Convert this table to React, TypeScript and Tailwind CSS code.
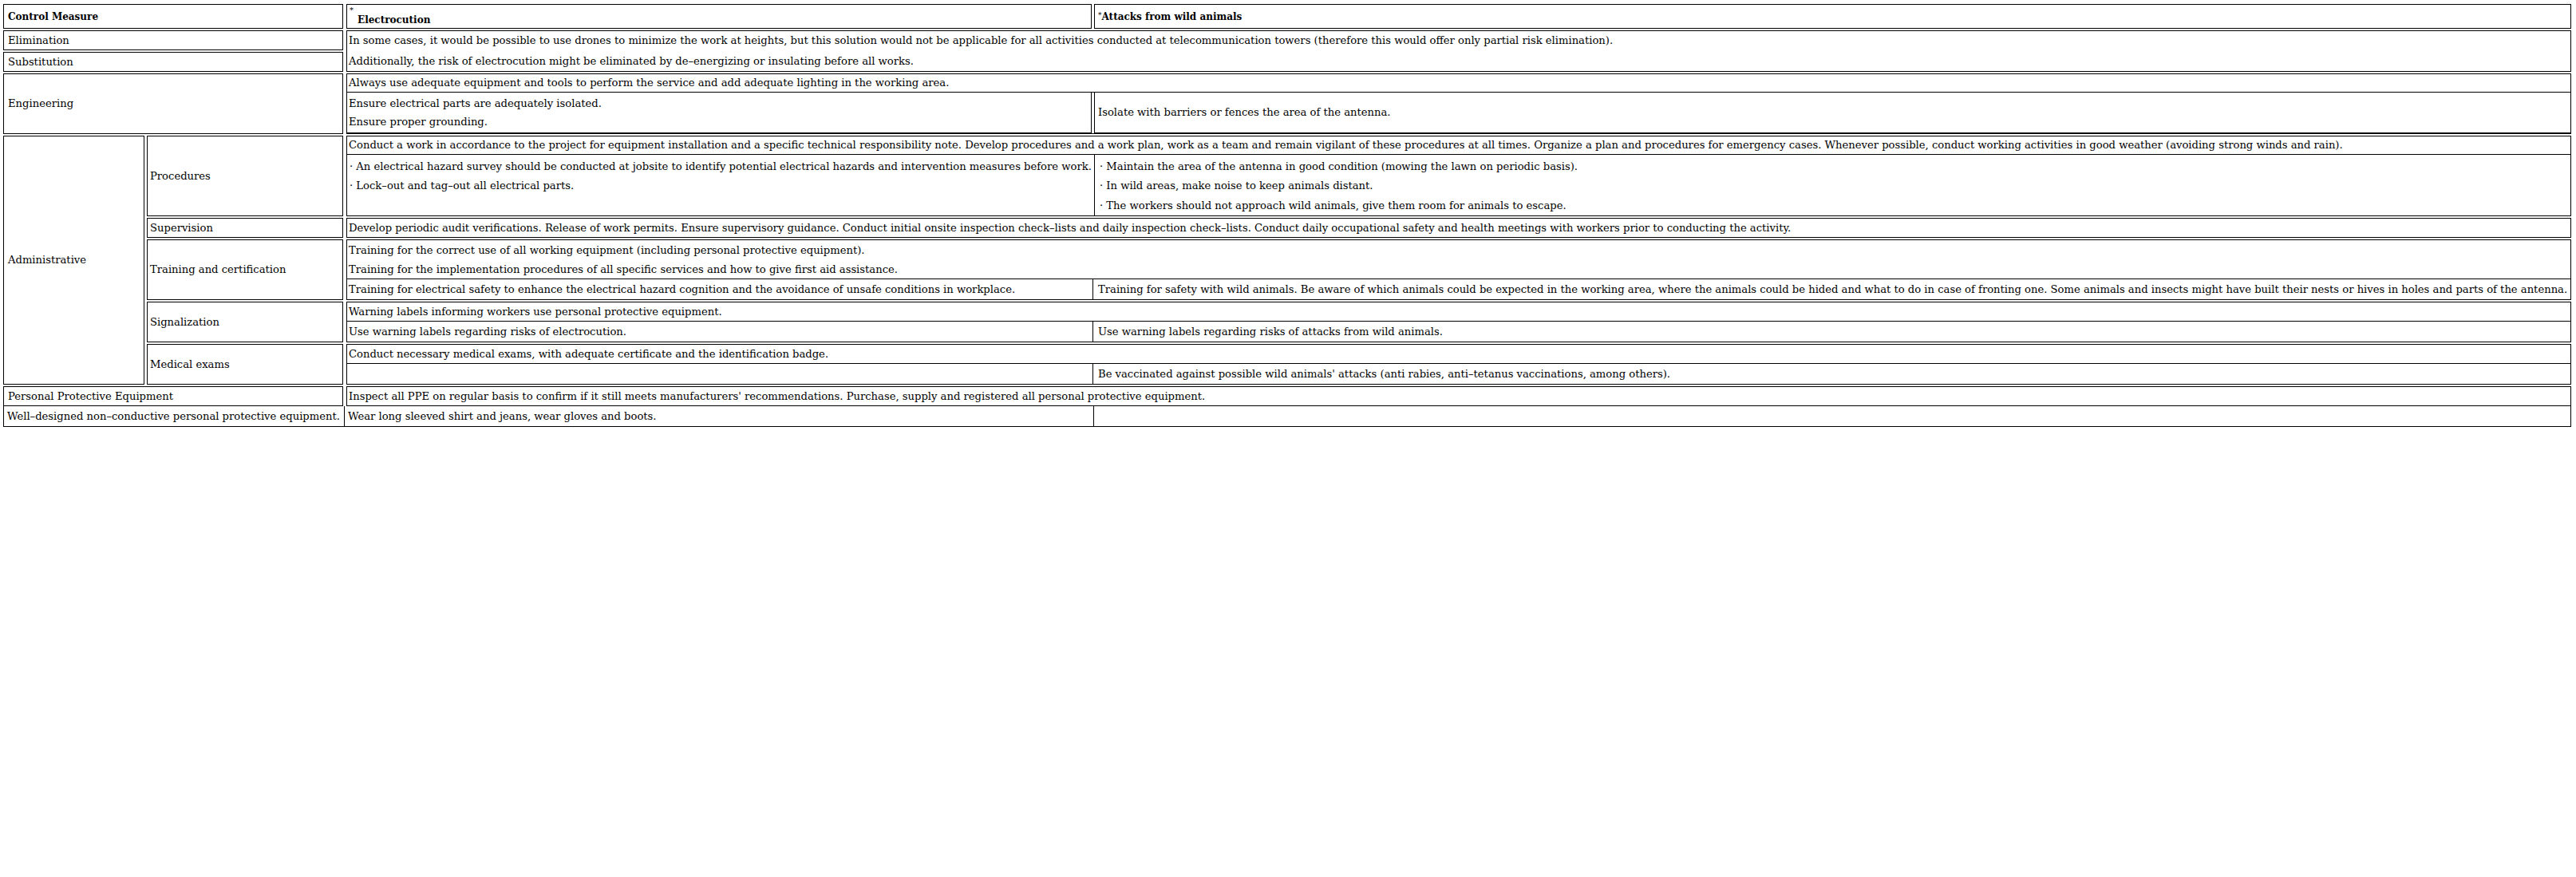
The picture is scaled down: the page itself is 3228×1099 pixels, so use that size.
const B = "border border-black";

function Row({ h, children }: { h: string; children: React.ReactNode }) {
  return <div className={`flex ${h}`}>{children}</div>;
}

export default function App() {
  return (
    <div className="w-[3228px] h-[1099px] bg-white text-black font-['DejaVu_Serif',serif] text-[13.15px] leading-[16px] pt-[5px] pl-[4px] whitespace-nowrap">
      <div className="flex flex-col gap-[2px] w-[3218px]">
        {/* header */}
        <Row h="h-[31px]">
          <div className={`${B} w-[426px] flex items-center pl-[5px] font-bold text-[12px]`}>Control Measure</div>
          <div className={`${B} ml-[4px] w-[934px] flex flex-col pt-[2px] pl-[3px]`}>
            <span className="text-[10px] leading-[9px]">*</span>
            <span className="font-bold text-[12px] pl-[10px] leading-[17px]">Electrocution</span>
          </div>
          <div className={`${B} ml-[3px] w-[1851px] flex items-center pl-[4px] font-bold text-[12px]`}>
            <span className="font-normal text-[9px] self-start mt-[5px]">*</span>Attacks from wild animals
          </div>
        </Row>

        {/* elimination + substitution */}
        <Row h="h-[52px]">
          <div className="w-[426px] flex flex-col gap-[2px]">
            <div className={`${B} h-[25px] flex items-center pl-[5px]`}>Elimination</div>
            <div className={`${B} h-[25px] flex items-center pl-[5px]`}>Substitution</div>
          </div>
          <div className={`${B} ml-[4px] w-[2788px] flex flex-col pl-[2px]`}>
            <div className="h-[24px] flex items-center">
              In some cases, it would be possible to use drones to minimize the work at heights, but this solution would not be applicable for all activities conducted at telecommunication towers (therefore this would offer only partial risk elimination).
            </div>
            <div className="h-[26px] flex items-center pt-[2px]">
              Additionally, the risk of electrocution might be eliminated by de–energizing or insulating before all works.
            </div>
          </div>
        </Row>

        {/* engineering */}
        <Row h="h-[76px]">
          <div className={`${B} w-[426px] flex items-center pl-[5px]`}>Engineering</div>
          <div className={`${B} ml-[4px] w-[2788px] flex flex-col`}>
            <div className="h-[23px] border-b border-black flex items-center pl-[2px]">
              Always use adequate equipment and tools to perform the service and add adequate lighting in the working area.
            </div>
            <div className="flex flex-1">
              <div className="w-[933px] border-r border-b border-black flex flex-col justify-center pl-[2px]">
                <div className="h-[23px] flex items-center pt-[1px]">Ensure electrical parts are adequately isolated.</div>
                <div className="h-[23px] flex items-center pt-[1px]">Ensure proper grounding.</div>
              </div>
              <div className="ml-[3px] flex-1 border-l border-b border-black flex items-center pl-[4px]">
                Isolate with barriers or fences the area of the antenna.
              </div>
            </div>
          </div>
        </Row>

        {/* administrative */}
        <Row h="h-[312px]">
          <div className={`${B} w-[177px] flex items-center pl-[5px]`}>Administrative</div>
          <div className="ml-[3px] flex flex-col gap-[2px]">
            {/* procedures */}
            <Row h="h-[101px]">
              <div className={`${B} w-[246px] flex items-center pl-[3px]`}>Procedures</div>
              <div className={`${B} ml-[4px] w-[2788px] flex flex-col`}>
                <div className="h-[24px] border-b border-black flex items-center pl-[2px]">
                  Conduct a work in accordance to the project for equipment installation and a specific technical responsibility note. Develop procedures and a work plan, work as a team and remain vigilant of these procedures at all times. Organize a plan and procedures for emergency cases. Whenever possible, conduct working activities in good weather (avoiding strong winds and rain).
                </div>
                <div className="flex flex-1">
                  <div className="w-[936px] flex flex-col pt-[3px] pl-[3px]">
                    <div className="h-[24px] flex items-center">· An electrical hazard survey should be conducted at jobsite to identify potential electrical hazards and intervention measures before work.</div>
                    <div className="h-[24px] flex items-center">· Lock–out and tag–out all electrical parts.</div>
                  </div>
                  <div className="flex-1 border-l border-black flex flex-col pt-[3px] pl-[6px]">
                    <div className="h-[24px] flex items-center">· Maintain the area of the antenna in good condition (mowing the lawn on periodic basis).</div>
                    <div className="h-[24px] flex items-center">· In wild areas, make noise to keep animals distant.</div>
                    <div className="h-[25px] flex items-center">· The workers should not approach wild animals, give them room for animals to escape.</div>
                  </div>
                </div>
              </div>
            </Row>

            {/* supervision */}
            <Row h="h-[25px]">
              <div className={`${B} w-[246px] flex items-center pl-[3px]`}>Supervision</div>
              <div className={`${B} ml-[4px] w-[2788px] flex items-center pl-[2px]`}>
                Develop periodic audit verifications. Release of work permits. Ensure supervisory guidance. Conduct initial onsite inspection check–lists and daily inspection check–lists. Conduct daily occupational safety and health meetings with workers prior to conducting the activity.
              </div>
            </Row>

            {/* training */}
            <Row h="h-[76px]">
              <div className={`${B} w-[246px] flex items-center pl-[3px]`}>Training and certification</div>
              <div className={`${B} ml-[4px] w-[2788px] flex flex-col`}>
                <div className="h-[49px] border-b border-black flex flex-col pl-[2px]">
                  <div className="h-[25px] flex items-center pt-[2px]">Training for the correct use of all working equipment (including personal protective equipment).</div>
                  <div className="h-[24px] flex items-center pt-[2px]">Training for the implementation procedures of all specific services and how to give first aid assistance.</div>
                </div>
                <div className="flex flex-1">
                  <div className="w-[934px] flex items-center pl-[2px]">
                    Training for electrical safety to enhance the electrical hazard cognition and the avoidance of unsafe conditions in workplace.
                  </div>
                  <div className="flex-1 border-l border-black flex items-center pl-[6px]">
                    Training for safety with wild animals. Be aware of which animals could be expected in the working area, where the animals could be hided and what to do in case of fronting one. Some animals and insects might have built their nests or hives in holes and parts of the antenna.
                  </div>
                </div>
              </div>
            </Row>

            {/* signalization */}
            <Row h="h-[51px]">
              <div className={`${B} w-[246px] flex items-center pl-[3px]`}>Signalization</div>
              <div className={`${B} ml-[4px] w-[2788px] flex flex-col`}>
                <div className="h-[24px] border-b border-black flex items-center pl-[2px]">
                  Warning labels informing workers use personal protective equipment.
                </div>
                <div className="flex flex-1">
                  <div className="w-[934px] flex items-center pl-[2px]">Use warning labels regarding risks of electrocution.</div>
                  <div className="flex-1 border-l border-black flex items-center pl-[6px]">Use warning labels regarding risks of attacks from wild animals.</div>
                </div>
              </div>
            </Row>

            {/* medical */}
            <Row h="h-[51px]">
              <div className={`${B} w-[246px] flex items-center pl-[3px]`}>Medical exams</div>
              <div className={`${B} ml-[4px] w-[2788px] flex flex-col`}>
                <div className="h-[24px] border-b border-black flex items-center pl-[2px]">
                  Conduct necessary medical exams, with adequate certificate and the identification badge.
                </div>
                <div className="flex flex-1">
                  <div className="w-[934px]" />
                  <div className="flex-1 border-l border-black flex items-center pl-[6px] pt-[1px]">
                    Be vaccinated against possible wild animals' attacks (anti rabies, anti–tetanus vaccinations, among others).
                  </div>
                </div>
              </div>
            </Row>
          </div>
        </Row>

        {/* ppe */}
        <Row h="h-[25px]">
          <div className={`${B} w-[426px] flex items-center pl-[5px]`}>Personal Protective Equipment</div>
          <div className={`${B} ml-[4px] w-[2788px] flex items-center pl-[2px]`}>
            Inspect all PPE on regular basis to confirm if it still meets manufacturers' recommendations. Purchase, supply and registered all personal protective equipment.
          </div>
        </Row>

        {/* last row */}
        <div className="flex h-[26px] -mt-[2px] border-l border-r border-b border-black">
          <div className="w-[427px] border-r border-black flex items-center pl-[4px]">
            Well–designed non–conductive personal protective equipment.
          </div>
          <div className="w-[939px] border-r border-black flex items-center pl-[4px]">
            Wear long sleeved shirt and jeans, wear gloves and boots.
          </div>
          <div className="flex-1" />
        </div>
      </div>
    </div>
  );
}
